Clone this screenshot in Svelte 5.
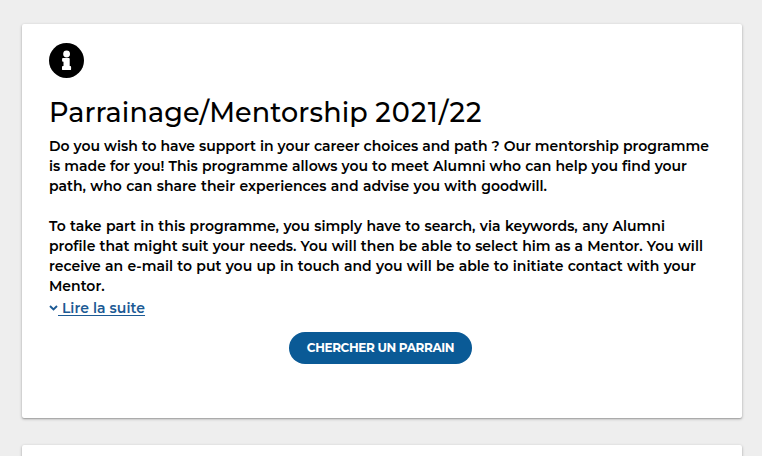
<script>
  const paragraphs = [
    [
      { text: 'Do you wish to have support in your career choices and path ? Our mentorship programme', width: 660 },
      { text: 'is made for you! This programme allows you to meet Alumni who can help you find your', width: 638 },
      { text: 'path, who can share their experiences and advise you with goodwill.', width: 498 },
    ],
    [
      { text: 'To take part in this programme, you simply have to search, via keywords, any Alumni', width: 616 },
      { text: 'profile that might suit your needs. You will then be able to select him as a Mentor. You will', width: 654 },
      { text: 'receive an e-mail to put you up in touch and you will be able to initiate contact with your', width: 647 },
      { text: 'Mentor.', width: 56 },
    ],
  ];
</script>

<main>
  <section class="card">
    <svg class="info" viewBox="0 0 35 35" aria-hidden="true">
      <circle cx="17.5" cy="17.5" r="17.5" fill="#000" />
      <circle cx="17.6" cy="11" r="3.4" fill="#fff" />
      <path d="M14 14.9h5.800q.9 0 .9.900V23h.5q.9 0 .9.900v2.300q0 .9-.9.900h-7.300q-.9 0-.9-.9v-2.300q0-.9.900-.9h.6v-4.300H14q-.9 0-.9-.9v-1.900q0-.9.900-.9z" fill="#fff" />
    </svg>
    <h1>Parrainage/Mentorship <span class="year">2021/22</span></h1>
    {#each paragraphs as lines}
      <p>
        {#each lines as line}
          <span class="line" style="width: {line.width}px">{line.text}</span>
        {/each}
      </p>
    {/each}
    <a class="more" href="#suite">
      <svg viewBox="0 0 9 6" aria-hidden="true"><path d="M1 1l3.5 3.5L8 1" fill="none" stroke="currentColor" stroke-width="1.9" /></svg><span>&nbsp;Lire la suite</span>
    </a>
    <button type="button">CHERCHER UN PARRAIN</button>
  </section>
  <section class="card"></section>
</main>

<style>
  :global(body) {
    margin: 0;
    background: #eee;
  }
  main {
    box-sizing: border-box;
    height: 456px;
    overflow: hidden;
    padding: 24px 20px 0 22px;
    display: flex;
    flex-direction: column;
    gap: 27px;
    background: #eee;
    color: #000;
    font-family: Montserrat, Inter, sans-serif;
  }
  .card {
    box-sizing: border-box;
    flex: none;
    height: 394px;
    padding: 19px 31px 0 27px;
    display: flex;
    flex-direction: column;
    align-items: flex-start;
    background: #fff;
    border-radius: 2px;
    box-shadow: 0 1px 3px rgba(0, 0, 0, 0.3), 0 1px 1px rgba(0, 0, 0, 0.12);
  }
  .info {
    display: block;
    width: 35px;
    height: 35px;
  }
  h1 {
    margin: 19px 0 7px;
    font-size: 27px;
    font-weight: 500;
    line-height: 32px;
    letter-spacing: 0.12px;
    white-space: nowrap;
  }
  .year {
    letter-spacing: 1.15px;
  }
  p {
    margin: 0 0 20px;
    font-size: 14px;
    font-weight: 600;
    line-height: 20px;
    letter-spacing: 0;
  }
  p + p {
    margin-bottom: 0;
  }
  .line {
    display: block;
    white-space: nowrap;
    text-align: justify;
    text-align-last: justify;
  }
  .more {
    display: flex;
    align-items: center;
    margin-top: 2px;
    color: #1c5a94;
    font-size: 14px;
    font-weight: 600;
    line-height: 20px;
    letter-spacing: 0.06px;
    text-decoration: none;
  }
  .more svg {
    width: 9px;
    height: 6px;
  }
  .more span {
    text-decoration: underline;
    text-underline-offset: 2px;
  }
  button {
    align-self: center;
    width: 183px;
    height: 32px;
    margin: 14px 0 0;
    padding: 0 0 1px 1px;
    border: 0;
    border-radius: 16px;
    background: #0a5a96;
    color: #fff;
    font: 700 12px Montserrat, Inter, sans-serif;
    letter-spacing: -0.37px;
    white-space: nowrap;
  }
</style>
